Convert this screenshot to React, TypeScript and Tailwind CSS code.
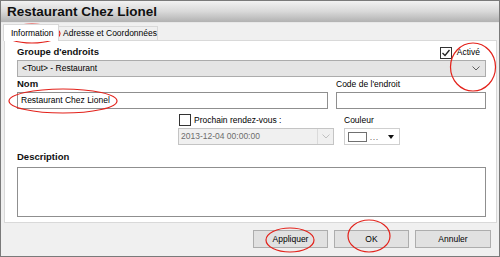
import React from 'react';

const font = { fontFamily: '"Liberation Sans", Arial, sans-serif' };

const Chevron: React.FC<{ color?: string }> = ({ color = '#606060' }) => (
  <svg width="8" height="5" viewBox="0 0 8 5">
    <polyline points="0.5,0.5 4,4 7.5,0.5" fill="none" stroke={color} strokeWidth="1" />
  </svg>
);

const Checkbox: React.FC<{ checked?: boolean }> = ({ checked }) => (
  <div className="w-[12px] h-[12px] shrink-0 border border-[#333] bg-white flex items-center justify-center">
    {checked && (
      <svg width="10" height="10" viewBox="0 0 10 10">
        <polyline points="1.5,5 4,7.5 8.5,2" fill="none" stroke="#222" strokeWidth="1.3" />
      </svg>
    )}
  </div>
);

const Button: React.FC<{ label: string; w: string }> = ({ label, w }) => (
  <div className={`${w} h-[18px] bg-[#e1e1e1] border border-[#adadad] flex items-center justify-center text-[8.5px] text-black`}>
    {label}
  </div>
);

export default function App() {
  return (
    <div style={font} className="relative w-[500px] h-[257px] bg-[#f0f0f0] border border-[#7a7a7a] text-black overflow-hidden">
      {/* Title bar */}
      <div className="h-[22px] bg-gradient-to-b from-[#f2f2f2] via-[#d9d9d9] to-[#b2b2b2] flex items-center pl-[6px] border-b border-[#e8e8e8]">
        <span className="text-[13.5px] font-bold text-[#111] leading-none">Restaurant Chez Lionel</span>
      </div>

      {/* Tabs */}
      <div className="h-[17px] flex items-end pl-[2px] whitespace-nowrap">
        <div className="relative z-10 -mb-px w-[56px] shrink-0 h-[17px] bg-white border border-b-0 border-[#d9d9d9] flex items-center pl-[7px] text-[8.5px]">
          Information
        </div>
        <div className="w-[99px] shrink-0 h-[14px] bg-[#f0f0f0] border border-b-0 border-l-0 border-[#d9d9d9] flex items-center pl-[4px] text-[8.5px]">
          Adresse et Coordonnées
        </div>
      </div>

      {/* Panel */}
      <div className="ml-[3px] w-[493px] h-[183px] bg-white border border-[#d9d9d9] pl-[12px] pr-[10px] pt-[4px] text-[8.5px] whitespace-nowrap">
        <div className="h-[15px] flex items-center justify-between">
          <span className="font-bold text-[9.5px] text-[#111]">Groupe d'endroits</span>
          <div className="flex items-center gap-[5px] pr-[6px]">
            <Checkbox checked />
            <span>Activé</span>
          </div>
        </div>
        <div className="h-[17px] bg-[#e5e5e5] border border-[#acacac] flex items-center justify-between pl-[4px] pr-[5px]">
          <span>&lt;Tout&gt; - Restaurant</span>
          <Chevron />
        </div>

        <div className="h-[15px] flex items-center">
          <span className="w-[319px] font-bold text-[9.5px] text-[#111]">Nom</span>
          <span>Code de l'endroit</span>
        </div>
        <div className="h-[17px] flex gap-[8px]">
          <div className="w-[311px] h-full border border-[#8f8f8f] flex items-center pl-[3px]">Restaurant Chez Lionel</div>
          <div className="flex-1 h-full border border-[#8f8f8f]" />
        </div>

        <div className="h-[19px] flex items-center pt-[3px]">
          <div className="ml-[162px] w-[165px] flex items-center gap-[3px]">
            <Checkbox />
            <span>Prochain rendez-vous :</span>
          </div>
          <span>Couleur</span>
        </div>
        <div className="h-[17px] flex">
          <div className="ml-[161px] w-[156px] h-full bg-[#f0f0f0] border border-[#c4c4c4] flex items-center">
            <span className="flex-1 pl-[2px] text-[#6d6d6d]">2013-12-04 00:00:00</span>
            <div className="w-[16px] h-full border-l border-[#dadada] flex items-center justify-center">
              <Chevron color="#c0c0c0" />
            </div>
          </div>
          <div className="ml-[10px] w-[56px] h-full bg-white border border-[#cfcfcf] flex items-center pl-[3px]">
            <div className="w-[19px] h-[10px] border border-[#707070] bg-white" />
            <span className="ml-[3px] text-[7px] leading-none self-end pb-[3px] tracking-[1px]">...</span>
            <svg className="ml-[9px]" width="6" height="4" viewBox="0 0 6 4">
              <polygon points="0,0 6,0 3,4" fill="#111" />
            </svg>
          </div>
        </div>

        <div className="h-[22px] flex items-end pb-[3px]">
          <span className="font-bold text-[9.5px] text-[#111]">Description</span>
        </div>
        <div className="h-[50px] border border-[#8f8f8f] bg-white" />
      </div>

      {/* Buttons */}
      <div className="flex justify-end gap-[6px] pr-[8px] pt-[7px]">
        <Button label="Appliquer" w="w-[75px]" />
        <Button label="OK" w="w-[75px]" />
        <Button label="Annuler" w="w-[76px]" />
      </div>

      {/* Red annotation circles */}
      <svg className="absolute inset-0 pointer-events-none" width="500" height="257" viewBox="0 0 500 257">
        <g fill="none" stroke="#e3221b" strokeWidth="1.2">
          <ellipse cx="31" cy="32.5" rx="28" ry="9.5" />
          <ellipse cx="472" cy="66" rx="22.5" ry="24" />
          <ellipse cx="62" cy="100" rx="54" ry="12" />
          <ellipse cx="289" cy="239" rx="24" ry="12" />
          <ellipse cx="368" cy="235" rx="21" ry="16" />
        </g>
      </svg>
    </div>
  );
}
